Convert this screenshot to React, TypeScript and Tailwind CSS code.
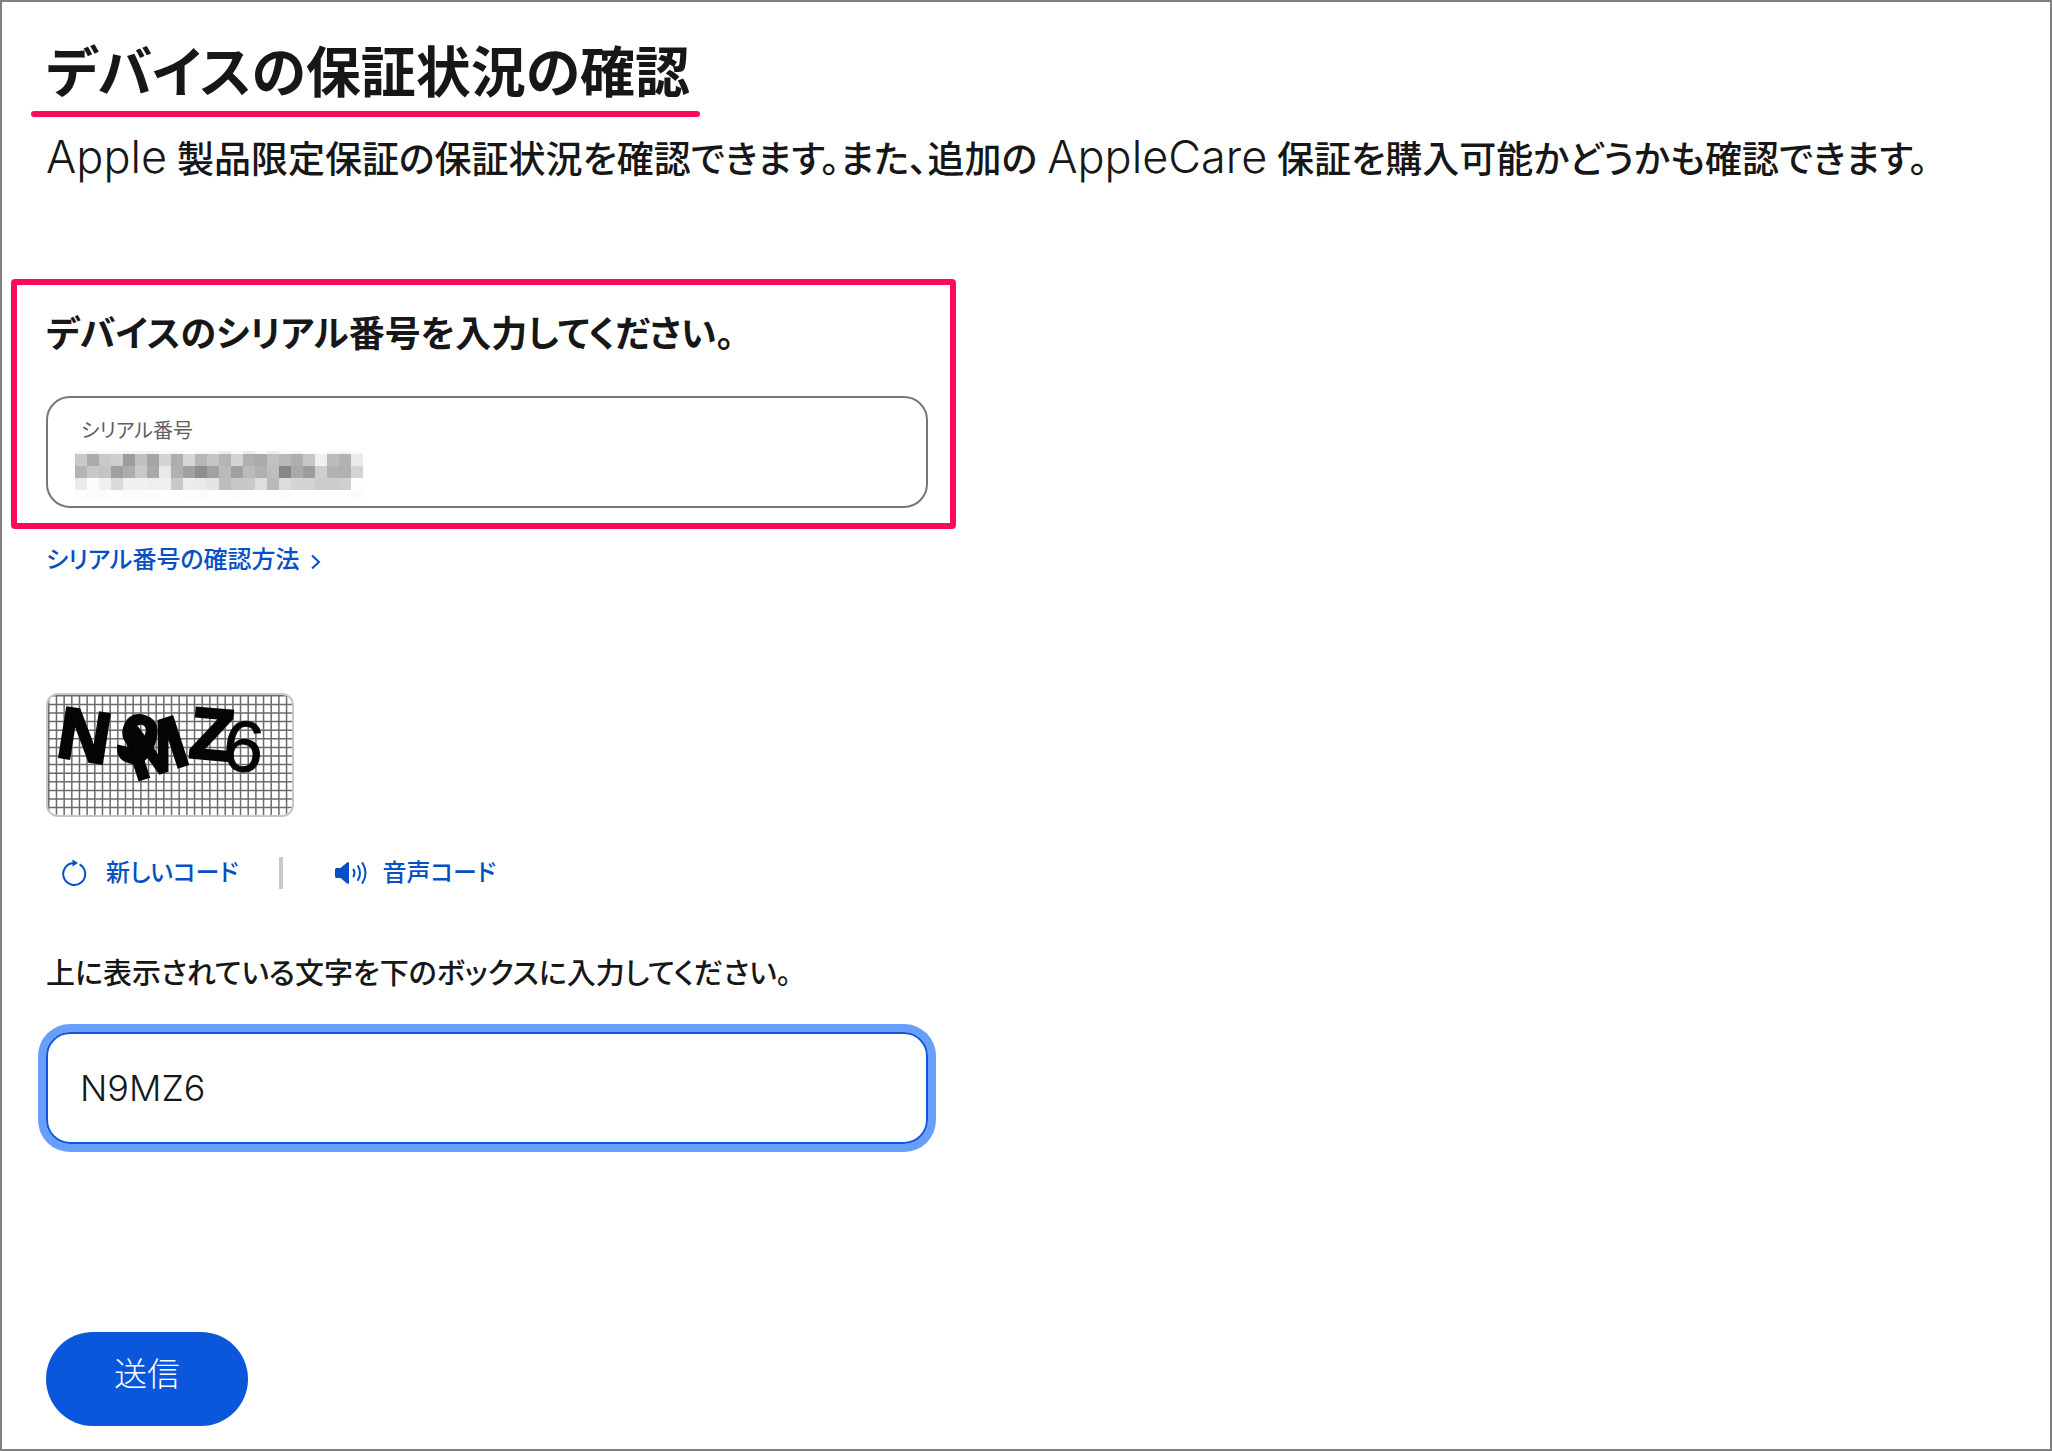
import { useState } from "react";

const mosaicRows = [
  "f6 f3 f8 f8 f3 f3 f3 f8 f6 fc f6 f6 ec fa ec fa ee fa f4 fa fe f6 f6 fa",
  "c8 aa c8 ce 9c c0 a6 d4 ae d6 b6 c4 b4 d4 b0 aa c0 b8 ae c6 f0 bc b2 ea",
  "b4 c8 c4 a0 ac c8 a8 e8 b0 a0 8e a2 ba a0 ba b0 be 86 aa 9c ce b2 b0 d4",
  "ea fc f0 da f0 f0 ee f0 c8 ec ea e4 bc c8 c8 de ba dc d4 d4 cc cc d0 fe",
  "fd fb fc fe fb fd fb fe fe fc fc fe fe fd fe fe fe fd fe fe fe fe fe fb",
].map((row) => row.split(" "));

const mosaicY = [0, 3, 15, 27, 39];
const mosaicH = [3, 12, 12, 12, 8];

function MaskedSerial() {
  return (
    <svg
      width="288"
      height="47"
      viewBox="0 0 288 47"
      shapeRendering="crispEdges"
      aria-hidden="true"
    >
      {mosaicRows.map((row, y) =>
        row.map((shade, x) => (
          <rect
            key={`${x}-${y}`}
            x={x * 12}
            y={mosaicY[y]}
            width="12"
            height={mosaicH[y]}
            fill={`#${shade}${shade}${shade}`}
          />
        )),
      )}
    </svg>
  );
}

function Captcha() {
  return (
    <svg
      width="244"
      height="120"
      viewBox="0 0 244 120"
      role="img"
      aria-label="画像コード"
      className="block overflow-visible"
    >
      <clipPath id="captcha-frame">
        <rect width="244" height="120" rx="10" />
      </clipPath>
      <g stroke="#6b6b6b" strokeWidth="1.5" clipPath="url(#captcha-frame)">
        {Array.from({ length: 32 }, (_, i) => (
          <path key={`v${i}`} d={`M${0.8 + i * 7.67} 0V120`} />
        ))}
        {Array.from({ length: 14 }, (_, i) => (
          <path key={`h${i}`} d={`M0 ${0.8 + i * 8.6}H244`} />
        ))}
      </g>
      <g
        fontFamily="'Liberation Sans', sans-serif"
        fontSize="72"
        fontWeight="700"
        fill="#050505"
        stroke="#050505"
        strokeWidth="3"
      >
        <text transform="translate(7 61) rotate(9)">N</text>
        <text transform="translate(64 60) rotate(20)" fontSize="68">
          9
        </text>
        <text transform="translate(87 86) rotate(-18)">M</text>
        <text transform="translate(140 62) rotate(5)">Z</text>
        <text
          transform="translate(173 74) rotate(6)"
          fontWeight="400"
          strokeWidth="1"
        >
          6
        </text>
      </g>
    </svg>
  );
}

function RefreshIcon() {
  return (
    <svg
      width="26"
      height="28"
      viewBox="0 0 26 28"
      fill="none"
      stroke="currentColor"
      strokeWidth="2"
      aria-hidden="true"
    >
      <path d="M18.6 5.4A11 11 0 1 1 12.5 4" />
      <path d="M11.5 0.6L17 4L11.5 7.4Z" fill="currentColor" stroke="none" />
    </svg>
  );
}

function SpeakerIcon() {
  return (
    <svg
      width="34"
      height="24"
      viewBox="0 0 34 24"
      fill="none"
      stroke="currentColor"
      strokeWidth="2"
      strokeLinecap="round"
      aria-hidden="true"
    >
      <path
        d="M2.5 7H6.5L13 1.4Q15 0.4 15 2.4V21.6Q15 23.6 13 22.6L6.5 17H2.5Q1 17 1 15.5V8.5Q1 7 2.5 7Z"
        fill="currentColor"
        stroke="none"
      />
      <path d="M19.5 8.5Q21.5 12 19.5 15.5" />
      <path d="M24 5Q28 12 24 19" />
      <path d="M28.5 2Q34.5 12 28.5 22" />
    </svg>
  );
}

export default function App() {
  const [serial, setSerial] = useState("");
  const [code, setCode] = useState("N9MZ6");

  return (
    <main className="min-h-screen border-2 border-[#808080] bg-white pt-[38px] pr-9 pb-5 pl-[9px] font-['Inter','Noto_Sans_CJK_JP',sans-serif] text-[#171717] [font-feature-settings:'palt']">
      <header className="pl-5">
        <div className="w-fit">
          <h1 className="pr-[10px] pl-[15px] text-[55px] leading-[64px] font-bold">
            デバイスの保証状況の確認
          </h1>
          <div className="mt-[7px] h-[6px] rounded-full bg-[#ff0a5a]" />
        </div>
        <p className="mt-3 pl-[15px] text-[37px] leading-[56px] font-medium">
          <span className="text-[45px] font-light">Apple</span>{" "}
          製品限定保証の保証状況を確認できます。また、追加の{" "}
          <span className="text-[45px] font-light">AppleCare</span>{" "}
          保証を購入可能かどうかも確認できます。
        </p>
      </header>

      <form onSubmit={(e) => e.preventDefault()}>
        <section className="mt-[91px] w-full max-w-[945px] rounded-[4px] border-[6px] border-[#ff0a5a] pt-[25px] pr-[22px] pb-[15px] pl-[29px]">
          <h2 className="text-[36px] leading-[48px] font-bold">
            デバイスのシリアル番号を入力してください。
          </h2>
          <div className="mt-[38px] flex h-28 flex-col rounded-3xl border-2 border-[#76767b] px-[33px] pt-[17px]">
            <label htmlFor="serial" className="text-xl leading-8 text-[#606064]">
              シリアル番号
            </label>
            <div className="mt-1 -ml-[6px] flex">
              <MaskedSerial />
              <input
                id="serial"
                value={serial}
                onChange={(e) => setSerial(e.target.value)}
                className="h-11 min-w-0 flex-1 text-[36px] font-light outline-none"
              />
            </div>
          </div>
        </section>

        <div className="pl-[35px]">
          <a
            href="#serial-help"
            className="mt-[13px] flex w-fit items-center gap-[10px] text-2xl leading-9 font-medium text-[#0650c4]"
          >
            <span>シリアル番号の確認方法</span>
            <svg
              width="12"
              height="18"
              viewBox="0 0 12 18"
              fill="none"
              stroke="currentColor"
              strokeWidth="2"
              aria-hidden="true"
              className="mt-1"
            >
              <path d="M2 2.5L9 9L2 15.5" />
            </svg>
          </a>

          <div className="mt-[115px] w-fit rounded-xl border-2 border-[#c6c6cc]">
            <Captcha />
          </div>

          <div className="mt-[38px] flex items-center text-2xl leading-9 font-medium text-[#0650c4]">
            <button type="button" className="flex items-center gap-[19px] pl-[15px]">
              <RefreshIcon />
              新しいコード
            </button>
            <div className="ml-[41px] h-8 w-1 bg-[#c6c6cc]" />
            <button type="button" className="ml-[51px] flex items-center gap-[14px]">
              <SpeakerIcon />
              音声コード
            </button>
          </div>

          <div className="w-full max-w-[882px]">
            <label
              htmlFor="code"
              className="mt-[63px] block text-[29px] leading-10 font-medium"
            >
              上に表示されている文字を下のボックスに入力してください。
            </label>
            <input
              id="code"
              value={code}
              onChange={(e) => setCode(e.target.value)}
              className="mt-[38px] block h-28 w-full rounded-3xl border-2 border-[#0b57db] px-8 text-[36px] font-light ring-8 ring-[#699ffc] outline-none"
            />
          </div>

          <button
            type="submit"
            className="mt-[188px] flex h-[94px] items-center rounded-full bg-[#0b57db] px-[68px] pb-2 text-[33px] font-light text-white"
          >
            送信
          </button>
        </div>
      </form>
    </main>
  );
}
